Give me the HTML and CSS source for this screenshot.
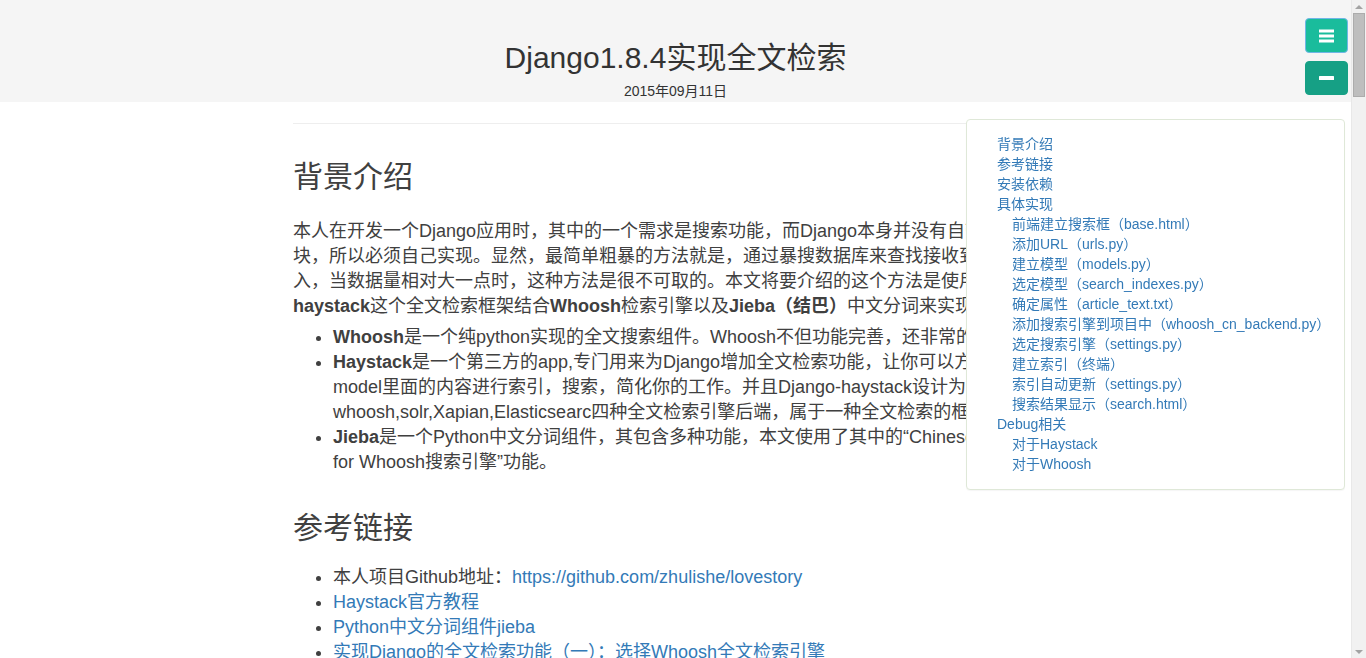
FILE: index.html
```html
<!DOCTYPE html>
<html lang="zh-CN">
<head>
<meta charset="utf-8">
<title>Django1.8.4实现全文检索</title>
<link rel="stylesheet" href="styles.css">
</head>
<body>
<header class="page-header">
  <h1 class="page-title">Django1.8.4实现全文检索</h1>
  <div class="page-date">2015年09月11日</div>
</header>

<main class="article">
  <hr class="rule">

  <h2 id="bg">背景介绍</h2>
  <p>本人在开发一个Django应用时，其中的一个需求是搜索功能，而Django本身并没有自带搜索模块，所以必须自己实现。显然，最简单粗暴的方法就是，通过暴搜数据库来查找接收到的用户输入，当数据量相对大一点时，这种方法是很不可取的。本文将要介绍的这个方法是使用Django-<b>haystack</b>这个全文检索框架结合<b>Whoosh</b>检索引擎以及<b>Jieba（结巴）</b>中文分词来实现。</p>
  <ul>
    <li><b>Whoosh</b>是一个纯python实现的全文搜索组件。Whoosh不但功能完善，还非常的快。</li>
    <li><b>Haystack</b>是一个第三方的app,专门用来为Django增加全文检索功能，让你可以方便地对model里面的内容进行索引，搜索，简化你的工作。并且Django-haystack设计为支持whoosh,solr,Xapian,Elasticsearc四种全文检索引擎后端，属于一种全文检索的框架。</li>
    <li><b>Jieba</b>是一个Python中文分词组件，其包含多种功能，本文使用了其中的“ChineseAnalyzer for Whoosh搜索引擎”功能。</li>
  </ul>

  <h2 id="ref">参考链接</h2>
  <ul>
    <li>本人项目Github地址：<a href="#ref">https://github.com/zhulishe/lovestory</a></li>
    <li><a href="#ref">Haystack官方教程</a></li>
    <li><a href="#ref">Python中文分词组件jieba</a></li>
    <li><a href="#ref">实现Django的全文检索功能（一）：选择Whoosh全文检索引擎</a></li>
    <li><a href="#ref">实现Django的全文检索功能（二）：集成Haystack</a></li>
    <li><a href="#ref">Django-haystack中文文档</a></li>
  </ul>

  <h2 id="dep">安装依赖</h2>
  <p>本文所使用的环境为Python 2.7 与 Django 1.8.4，需要通过pip安装以下几个依赖包：</p>
  <pre class="code">pip install whoosh
pip install django-haystack
pip install jieba</pre>

  <h2 id="impl">具体实现</h2>
  <h3>前端建立搜索框（base.html）</h3>
  <p>在模板中加入一个简单的搜索表单，表单以GET方式提交到/search/地址，输入框的name必须为q。</p>
  <pre class="code">&lt;form method="get" action="/search/"&gt;
    &lt;input type="text" name="q" placeholder="搜索"&gt;
    &lt;button type="submit"&gt;搜索&lt;/button&gt;
&lt;/form&gt;</pre>
  <h3>添加URL（urls.py）</h3>
  <p>在项目的urls.py中加入haystack的url配置。</p>
  <pre class="code">url(r'^search/', include('haystack.urls')),</pre>
  <h3>建立模型（models.py）</h3>
  <p>这里以一篇文章的模型为例，包含标题、正文、发布时间等字段。</p>
  <pre class="code">class Article(models.Model):
    title = models.CharField(max_length=100)
    text = models.TextField()
    pub_date = models.DateTimeField()</pre>
  <h3>选定模型（search_indexes.py）</h3>
  <p>在app目录下新建search_indexes.py，为需要检索的模型建立索引类。</p>
  <pre class="code">class ArticleIndex(indexes.SearchIndex, indexes.Indexable):
    text = indexes.CharField(document=True, use_template=True)

    def get_model(self):
        return Article

    def index_queryset(self, using=None):
        return self.get_model().objects.all()</pre>
  <h3>确定属性（article_text.txt）</h3>
  <p>在templates/search/indexes/app名/下新建article_text.txt，指定需要被索引的字段。</p>
  <pre class="code">{{ object.title }}
{{ object.text }}</pre>
  <h3>添加搜索引擎到项目中（whoosh_cn_backend.py）</h3>
  <p>将haystack自带的whoosh_backend.py复制到app目录下并重命名为whoosh_cn_backend.py，把其中的StemmingAnalyzer替换为jieba的ChineseAnalyzer。</p>
  <pre class="code">from jieba.analyse import ChineseAnalyzer
analyzer=ChineseAnalyzer()</pre>
  <h3>选定搜索引擎（settings.py）</h3>
  <pre class="code">HAYSTACK_CONNECTIONS = {
    'default': {
        'ENGINE': 'blog.whoosh_cn_backend.WhooshEngine',
        'PATH': os.path.join(BASE_DIR, 'whoosh_index'),
    },
}</pre>
  <h3>建立索引（终端）</h3>
  <pre class="code">python manage.py rebuild_index</pre>
  <h3>索引自动更新（settings.py）</h3>
  <pre class="code">HAYSTACK_SIGNAL_PROCESSOR = 'haystack.signals.RealtimeSignalProcessor'</pre>
  <h3>搜索结果显示（search.html）</h3>
  <p>在templates/search/目录下新建search.html，用于展示搜索结果以及分页。</p>
  <pre class="code">{% for result in page.object_list %}
    &lt;a href="{{ result.object.get_absolute_url }}"&gt;{{ result.object.title }}&lt;/a&gt;
{% empty %}
    &lt;p&gt;没有找到相关结果。&lt;/p&gt;
{% endfor %}</pre>

  <h2 id="debug">Debug相关</h2>
  <h3>对于Haystack</h3>
  <p>如果出现找不到模板的错误，请检查article_text.txt的路径是否与app名、模型名一致，注意全部使用小写。</p>
  <h3>对于Whoosh</h3>
  <p>如果索引建立后搜索不到中文内容，请确认settings.py中的ENGINE已经指向whoosh_cn_backend，并重新执行rebuild_index。</p>
</main>

<nav class="toc">
  <ul class="toc-list">
    <li><a href="#bg">背景介绍</a></li>
    <li><a href="#ref">参考链接</a></li>
    <li><a href="#dep">安装依赖</a></li>
    <li><a href="#impl">具体实现</a>
      <ul class="toc-sub">
        <li><a href="#impl">前端建立搜索框（base.html）</a></li>
        <li><a href="#impl">添加URL（urls.py）</a></li>
        <li><a href="#impl">建立模型（models.py）</a></li>
        <li><a href="#impl">选定模型（search_indexes.py）</a></li>
        <li><a href="#impl">确定属性（article_text.txt）</a></li>
        <li><a href="#impl">添加搜索引擎到项目中（whoosh_cn_backend.py）</a></li>
        <li><a href="#impl">选定搜索引擎（settings.py）</a></li>
        <li><a href="#impl">建立索引（终端）</a></li>
        <li><a href="#impl">索引自动更新（settings.py）</a></li>
        <li><a href="#impl">搜索结果显示（search.html）</a></li>
      </ul>
    </li>
    <li><a href="#debug">Debug相关</a>
      <ul class="toc-sub">
        <li><a href="#debug">对于Haystack</a></li>
        <li><a href="#debug">对于Whoosh</a></li>
      </ul>
    </li>
  </ul>
</nav>

<div class="toc-buttons">
  <button class="btn btn-menu" type="button" aria-label="目录">
    <svg width="15" height="14" viewBox="0 0 15 14"><rect x="0" y="0.5" width="15" height="3" fill="#fff"/><rect x="0" y="5.5" width="15" height="3" fill="#fff"/><rect x="0" y="10.5" width="15" height="3" fill="#fff"/></svg>
  </button>
  <button class="btn btn-fold" type="button" aria-label="收起">
    <svg width="15" height="4" viewBox="0 0 15 4"><rect x="0" y="0" width="15" height="4" rx="0.5" fill="#fff"/></svg>
  </button>
</div>

<div class="scrollbar" aria-hidden="true">
  <div class="sb-arrow sb-up"></div>
  <div class="sb-track"><div class="sb-thumb"></div></div>
  <div class="sb-arrow sb-down"></div>
</div>
</body>
</html>
```

FILE: styles.css
```css
html, body {
  margin: 0;
  padding: 0;
}

body {
  padding-right: 15px;
  font-family: "Liberation Sans", "Noto Sans CJK SC", sans-serif;
  font-size: 18px;
  line-height: 25px;
  color: #404040;
  background: #fff;
}

a {
  color: #337ab7;
  text-decoration: none;
}

.page-header {
  background: #f5f5f5;
  text-align: center;
  padding: 41px 0 1px;
}

.page-title {
  margin: 0;
  font-size: 30px;
  line-height: 34px;
  font-weight: normal;
  color: #333;
}

.page-date {
  margin-top: 6px;
  font-size: 14px;
  line-height: 20px;
  color: #333;
}

.article {
  width: 765px;
  min-height: 4850px;
  margin: 0 auto;
  padding-bottom: 60px;
}

.rule {
  margin: 21px 0 0;
  border: 0;
  border-top: 1px solid #eee;
}

.article h2 {
  margin: 36px 0 21px;
  font-size: 30px;
  line-height: 33px;
  font-weight: normal;
  color: #404040;
}

.article h3 {
  margin: 28px 0 12px;
  font-size: 22px;
  line-height: 28px;
  font-weight: normal;
  color: #404040;
}

.article p {
  margin: 0 0 6px;
  padding-top: 5px;
}

.article ul {
  margin: 0 0 10px;
  padding-left: 40px;
}

.code {
  margin: 0 0 14px;
  padding: 10px 12px;
  font-family: "Liberation Mono", monospace;
  font-size: 13px;
  line-height: 19px;
  color: #333;
  background: #f5f5f5;
  border: 1px solid #ccc;
  border-radius: 4px;
  white-space: pre;
  overflow: hidden;
}

.toc {
  position: fixed;
  top: 119px;
  right: 21px;
  width: 347px;
  padding: 14px 0 15px 30px;
  background: #fff;
  border: 1px solid #dfe8d8;
  border-radius: 4px;
  box-shadow: 0 1px 1px rgba(0, 0, 0, 0.04);
  font-size: 14px;
  line-height: 20px;
}

.toc-list,
.toc-sub {
  list-style: none;
  margin: 0;
  padding: 0;
}

.toc-sub {
  padding-left: 15px;
}

.toc-buttons {
  position: fixed;
  top: 18px;
  right: 18px;
  display: flex;
  flex-direction: column;
  gap: 8px;
}

.btn {
  display: flex;
  align-items: center;
  justify-content: center;
  width: 43px;
  padding: 0;
  border-radius: 4px;
  cursor: pointer;
}

.btn-menu {
  height: 35px;
  background: #1abc9c;
  border: 1px solid #6fb6e6;
}

.btn-fold {
  height: 34px;
  background: #16a085;
  border: 1px solid #16a085;
}

/* drawn window scrollbar, as in the reference */
.scrollbar {
  position: fixed;
  top: 0;
  right: 0;
  bottom: 0;
  width: 15px;
  display: flex;
  flex-direction: column;
  background: #f1f1f1;
  border-left: 1px solid #e8e8e8;
  box-sizing: border-box;
}

.sb-arrow {
  height: 13px;
  flex: none;
  display: flex;
  justify-content: center;
  align-items: center;
}

.sb-up::before,
.sb-down::before {
  content: "";
  width: 0;
  height: 0;
  border-left: 4px solid transparent;
  border-right: 4px solid transparent;
}

.sb-up::before {
  border-bottom: 4px solid #a3a3a3;
}

.sb-down::before {
  border-top: 4px solid #a3a3a3;
}

.sb-track {
  flex: 1;
  padding: 0 1px;
}

.sb-thumb {
  height: 84px;
  background: #bebebe;
  border: 1px solid #acacac;
  box-sizing: border-box;
}
```
